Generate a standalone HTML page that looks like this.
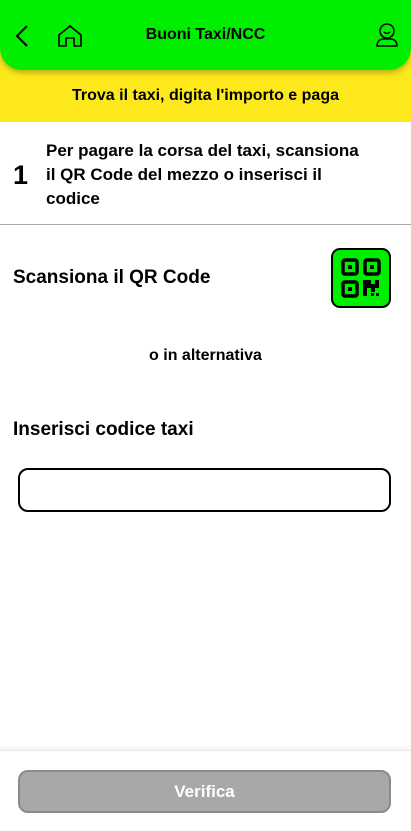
<!DOCTYPE html>
<html><head><meta charset="utf-8"><style>
*{margin:0;padding:0;box-sizing:border-box}
body{width:411px;height:831px;position:relative;background:#fff;font-family:"Liberation Sans",sans-serif;color:#000;overflow:hidden}
.yellow{position:absolute;top:50px;left:0;width:411px;height:72px;background:#fde91b}
.yellow div{position:absolute;top:37px;width:100%;text-align:center;font-weight:bold;font-size:16px}
.hdr{position:absolute;top:0;left:0;width:411px;height:70px;background:#00ee00;border-radius:0 0 22px 22px;box-shadow:0 3px 6px rgba(0,0,0,.25)}
.title{position:absolute;top:26px;width:100%;text-align:center;font-weight:bold;font-size:16px}
.step{position:absolute;top:139px;left:46px;font-weight:bold;font-size:17px;line-height:24px;width:365px;white-space:nowrap}
.num{position:absolute;top:160px;left:13px;font-weight:bold;font-size:27px}
.hr{position:absolute;top:224px;left:0;width:411px;height:1px;background:#aaa}
.scan{position:absolute;top:267px;left:13px;font-weight:bold;font-size:19px}
.qr{position:absolute;top:248px;left:331px;width:60px;height:60px;background:#00ee00;border:2px solid #000;border-radius:9px}
.alt{position:absolute;top:347px;width:100%;text-align:center;font-weight:bold;font-size:16px}
.ins{position:absolute;top:419px;left:13px;font-weight:bold;font-size:19px}
.inp{position:absolute;top:468px;left:18px;width:373px;height:44px;border:2px solid #000;border-radius:10px}
.foot{position:absolute;top:750px;left:0;width:411px;height:81px;border-top:1px solid #e6e6e6;box-shadow:0 -2px 4px rgba(0,0,0,.06)}
.btn{position:absolute;top:770px;left:18px;width:373px;height:43px;background:#a8a8a8;border:2px solid #8a8a8a;border-radius:10px;color:#fff;font-weight:bold;font-size:17px;text-align:center;line-height:39px}
</style></head><body>
<div class="yellow"><div>Trova il taxi, digita l'importo e paga</div></div>
<div class="hdr">
<svg style="position:absolute;left:14px;top:24px" width="16" height="24" viewBox="0 0 16 24"><path d="M13 2 L3 12 L13 22" fill="none" stroke="#000" stroke-width="2"/></svg>
<svg style="position:absolute;left:57px;top:24px" width="26" height="24" viewBox="0 0 26 24"><path d="M2 11 L13 2 L24 11 V22 H17 V14 H9 V22 H2 Z" fill="none" stroke="#000" stroke-width="1.6" stroke-linejoin="round"/></svg>
<div class="title">Buoni Taxi/NCC</div>
<svg style="position:absolute;left:375px;top:22px" width="24" height="26" viewBox="0 0 24 26"><circle cx="12" cy="9" r="7" fill="none" stroke="#000" stroke-width="1.5"/><path d="M9 10 Q12 13 15 10" fill="none" stroke="#000" stroke-width="1.3"/><path d="M2 24 Q2 16 12 17 Q22 16 22 24 Z" fill="none" stroke="#000" stroke-width="1.5"/></svg>
</div>
<div class="num">1</div>
<div class="step">Per pagare la corsa del taxi, scansiona<br>il QR Code del mezzo o inserisci il<br>codice</div>
<div class="hr"></div>
<div class="scan">Scansiona il QR Code</div>
<div class="qr"><svg style="position:absolute;left:8px;top:8px" width="40" height="40" viewBox="0 0 40 40">
<g fill="none" stroke="#000" stroke-width="3.5"><rect x="2" y="2" width="14" height="14" rx="2"/><rect x="24" y="2" width="14" height="14" rx="2"/><rect x="2" y="24" width="14" height="14" rx="2"/></g>
<rect x="7" y="7" width="4" height="4"/><rect x="29" y="7" width="4" height="4"/><rect x="7" y="29" width="4" height="4"/>
<path d="M22 22 H30 V26 H34 V22 H38 V30 H34 V34 H30 V30 H26 V38 H22 Z"/><rect x="30" y="35" width="3" height="3"/><rect x="35" y="35" width="3" height="3"/>
</svg></div>
<div class="alt">o in alternativa</div>
<div class="ins">Inserisci codice taxi</div>
<div class="inp"></div>
<div class="foot"></div>
<div class="btn">Verifica</div>
</body></html>
